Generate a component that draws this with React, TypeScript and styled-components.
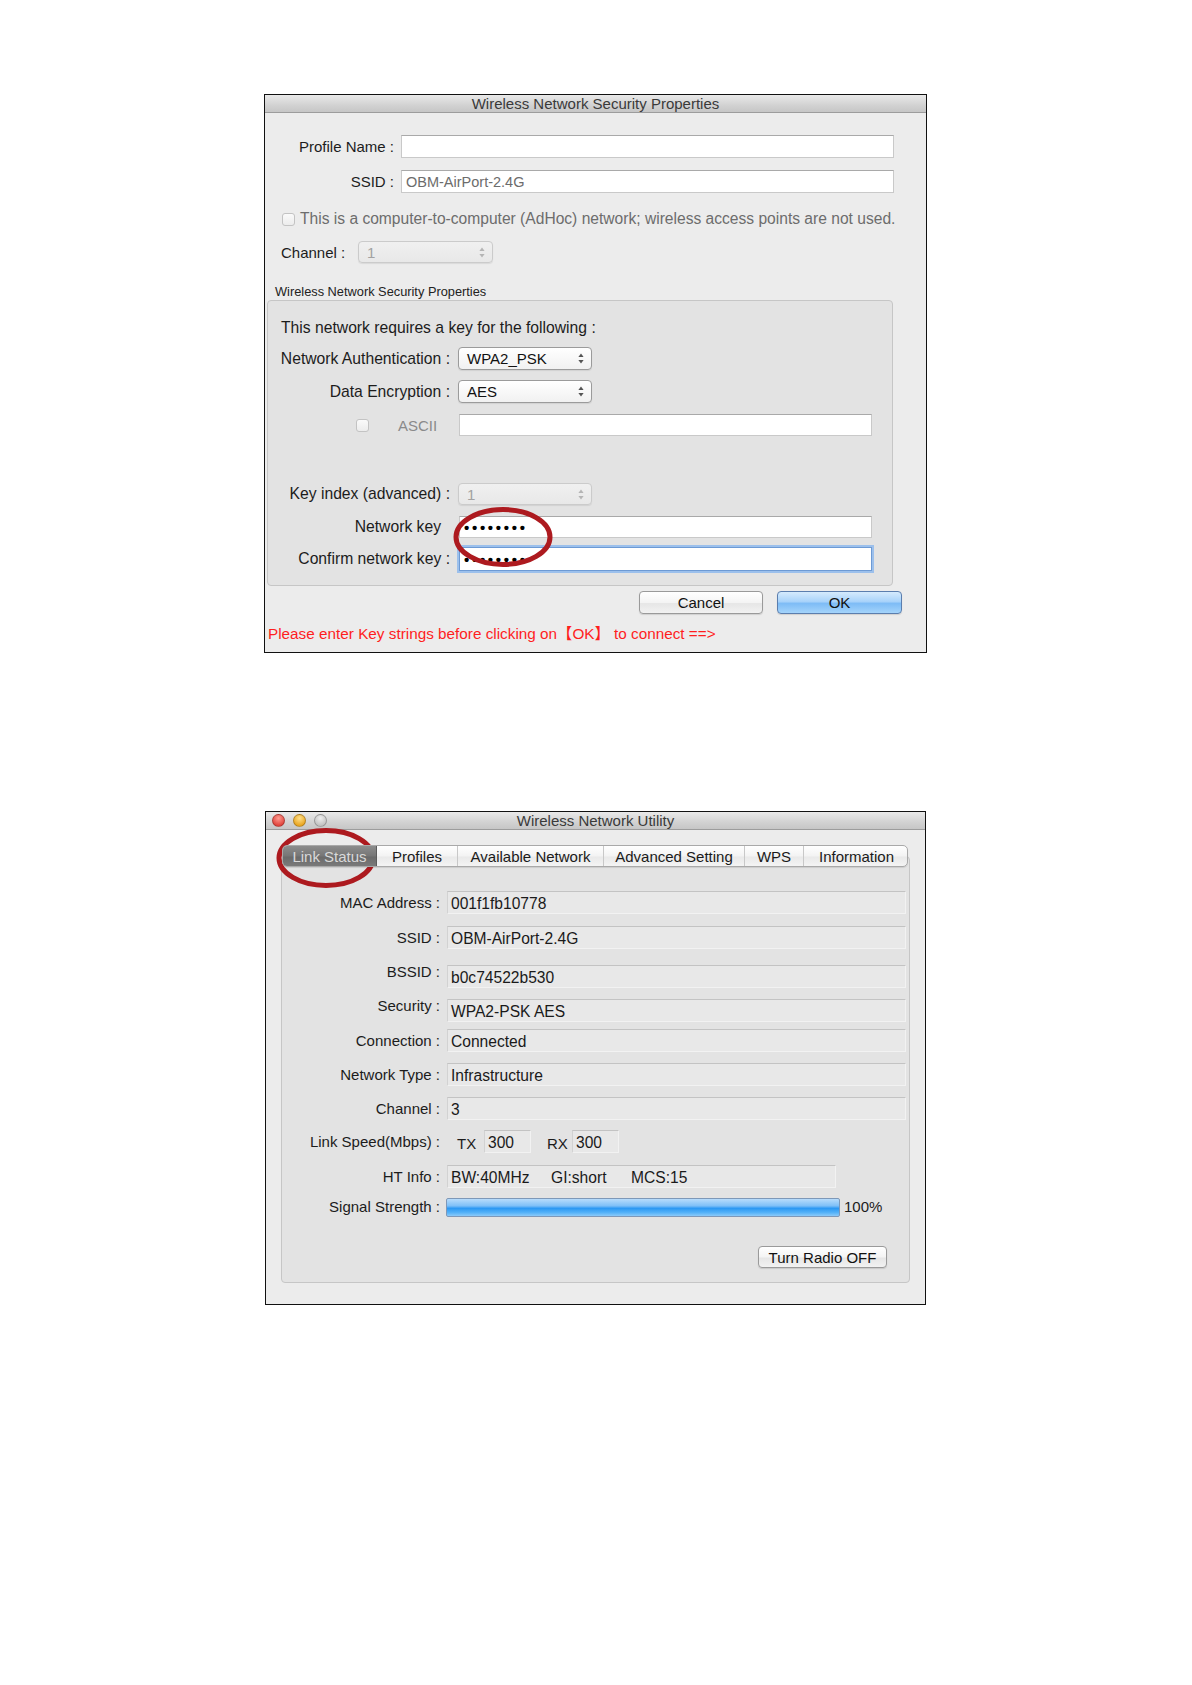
import React from "react";
import styled, { createGlobalStyle } from "styled-components";

const GlobalStyle = createGlobalStyle`
  html, body {
    margin: 0;
    padding: 0;
    background: #fff;
  }
  body {
    font-family: "Liberation Sans", Arial, sans-serif;
  }
`;

const Page = styled.div`
  width: 1192px;
  height: 1685px;
  box-sizing: border-box;
  padding: 94px 0 0 264px;
  display: flex;
  flex-direction: column;
  align-items: flex-start;
`;

const Window = styled.section<{ $w: number; $h: number; $top?: number; $left?: number }>`
  position: relative;
  box-sizing: border-box;
  width: ${(p) => p.$w}px;
  height: ${(p) => p.$h}px;
  margin-top: ${(p) => p.$top ?? 0}px;
  margin-left: ${(p) => p.$left ?? 0}px;
  border: 1px solid #111;
  background: #ececec;
  display: flex;
  flex-direction: column;
  font-size: 15px;
  color: #1c1c1c;
`;

const TitleBar = styled.header`
  position: relative;
  height: 17px;
  flex: none;
  border-bottom: 1px solid #9c9c9c;
  background: linear-gradient(#e9e9e9, #d2d2d2 60%, #c6c6c6);
  display: flex;
  align-items: center;
  justify-content: center;
  font-size: 15px;
  color: #3a3a3a;
`;

const Lights = styled.div`
  position: absolute;
  left: 6px;
  top: 2px;
  display: flex;
  gap: 8px;
`;

const Light = styled.span<{ $c1: string; $c2: string }>`
  width: 13px;
  height: 13px;
  border-radius: 50%;
  box-sizing: border-box;
  border: 1px solid rgba(0, 0, 0, 0.25);
  background: radial-gradient(circle at 50% 30%, ${(p) => p.$c1}, ${(p) => p.$c2} 75%);
`;

const Body = styled.div`
  display: flex;
  flex-direction: column;
  flex: 1;
`;

const Row = styled.div<{ $top: number; $h?: number; $pl?: number }>`
  display: flex;
  align-items: center;
  margin-top: ${(p) => p.$top}px;
  height: ${(p) => p.$h ?? 23}px;
  padding-left: ${(p) => p.$pl ?? 0}px;
  flex: none;
`;

const Label = styled.span<{ $w: number; $gap: number; $pr?: number; $lift?: number }>`
  width: ${(p) => p.$w}px;
  margin-right: ${(p) => p.$gap}px;
  padding-right: ${(p) => p.$pr ?? 0}px;
  box-sizing: border-box;
  text-align: right;
  white-space: nowrap;
  position: relative;
  top: ${(p) => -(p.$lift ?? 0)}px;
`;

const PlainText = styled.span<{ $w?: number; $color?: string; $size?: number }>`
  ${(p) => (p.$w ? `width: ${p.$w}px;` : "")}
  ${(p) => (p.$size ? `font-size: ${p.$size}px;` : "")}
  color: ${(p) => p.$color ?? "#1c1c1c"};
  white-space: nowrap;
`;

const TextInput = styled.div<{ $w: number; $h?: number; $focus?: boolean; $color?: string }>`
  width: ${(p) => p.$w}px;
  height: ${(p) => p.$h ?? 23}px;
  box-sizing: border-box;
  background: #fff;
  border: 1px solid ${(p) => (p.$focus ? "#6d9ad4" : "#c9c9c9")};
  border-top-color: ${(p) => (p.$focus ? "#6d9ad4" : "#a9a9a9")};
  box-shadow: ${(p) => (p.$focus ? "0 0 0 2px #9cc0ec" : "none")};
  display: flex;
  align-items: center;
  padding-left: 4px;
  color: ${(p) => p.$color ?? "#111"};
  font-size: 14.5px;
`;

const Dots = styled.span`
  font-size: 15px;
  font-weight: bold;
  letter-spacing: 2.7px;
  color: #000;
`;

const SelectBox = styled.div<{ $w: number; $h?: number; $disabled?: boolean }>`
  width: ${(p) => p.$w}px;
  height: ${(p) => p.$h ?? 23}px;
  box-sizing: border-box;
  border-radius: 4px;
  border: 1px solid ${(p) => (p.$disabled ? "#cbcbcb" : "#9b9b9b")};
  background: ${(p) => (p.$disabled ? "linear-gradient(#f0f0f0, #e8e8e8)" : "linear-gradient(#ffffff, #f1f1f1)")};
  box-shadow: 0 1px 1px rgba(0, 0, 0, 0.08);
  display: flex;
  align-items: center;
  justify-content: space-between;
  padding: 0 7px 0 8px;
  font-size: 15px;
  color: ${(p) => (p.$disabled ? "#a2a2a2" : "#111")};
`;

const Checkbox = styled.span<{ $ml?: number }>`
  width: 13px;
  height: 13px;
  box-sizing: border-box;
  border: 1px solid #c3c3c3;
  border-radius: 3px;
  background: linear-gradient(#fafafa, #ececec);
  margin-left: ${(p) => p.$ml ?? 0}px;
  flex: none;
`;

const GroupCaption = styled.div`
  margin-top: 21px;
  height: 14px;
  padding-left: 10px;
  font-size: 12.8px;
  color: #222;
  display: flex;
  align-items: center;
`;

const GroupBox = styled.div`
  margin: 2px 0 0 2px;
  width: 626px;
  height: 286px;
  box-sizing: border-box;
  border: 1px solid #c6c6c6;
  border-radius: 4px;
  background: #e3e3e3;
  display: flex;
  flex-direction: column;
  font-size: 15.7px;
`;

const ButtonRow = styled.div`
  margin-top: 5px;
  height: 23px;
  display: flex;
  justify-content: flex-end;
  gap: 14px;
  padding-right: 24px;
`;

const MacButton = styled.button<{ $w: number; $primary?: boolean; $h?: number }>`
  width: ${(p) => p.$w}px;
  height: ${(p) => p.$h ?? 23}px;
  border-radius: 4px;
  font-family: "Liberation Sans", Arial, sans-serif;
  font-size: 15px;
  color: #111;
  padding: 0;
  cursor: default;
  border: 1px solid ${(p) => (p.$primary ? "#5b7eae" : "#9a9a9a")};
  background: ${(p) =>
    p.$primary
      ? "linear-gradient(#d5ebfd, #a9d3fa 45%, #7ebcf6 55%, #a4d4fb)"
      : "linear-gradient(#ffffff, #f4f4f4 50%, #e6e6e6 55%, #f2f2f2)"};
  box-shadow: 0 1px 1px rgba(0, 0, 0, 0.12);
`;

const Warning = styled.div`
  margin-top: 9px;
  height: 17px;
  padding-left: 3px;
  color: #ff1e1e;
  font-size: 15.3px;
  font-family: "Liberation Sans", "Noto Sans CJK SC", sans-serif;
  display: flex;
  align-items: center;
  white-space: nowrap;
`;

const Highlight = styled.svg<{ $x: number; $y: number }>`
  position: absolute;
  left: ${(p) => p.$x}px;
  top: ${(p) => p.$y}px;
  pointer-events: none;
  overflow: visible;
`;

/* ---- tab view ---- */

const TabBar = styled.div`
  position: relative;
  z-index: 1;
  margin: 15px 0 0 16px;
  width: 626px;
  height: 22px;
  box-sizing: border-box;
  border: 1px solid #a9a9a9;
  border-radius: 5px;
  background: linear-gradient(#ffffff, #f3f3f3 50%, #e9e9e9 55%, #f4f4f4);
  display: flex;
  overflow: hidden;
  box-shadow: 0 1px 1px rgba(0, 0, 0, 0.1);
`;

const Tab = styled.div<{ $w: number; $active?: boolean; $last?: boolean }>`
  width: ${(p) => p.$w}px;
  flex: none;
  box-sizing: border-box;
  display: flex;
  align-items: center;
  justify-content: center;
  font-size: 15px;
  white-space: nowrap;
  color: ${(p) => (p.$active ? "#d9d9d9" : "#1a1a1a")};
  background: ${(p) => (p.$active ? "linear-gradient(#8c8c8c, #767676 50%, #6a6a6a 55%, #7a7a7a)" : "transparent")};
  border-right: ${(p) => (p.$last ? "none" : p.$active ? "1px solid #5c5c5c" : "1px solid #c8c8c8")};
`;

const Panel = styled.div`
  margin: -11px 0 0 15px;
  width: 629px;
  height: 427px;
  box-sizing: border-box;
  border: 1px solid #c6c6c6;
  border-radius: 4px;
  background: #e3e3e3;
  display: flex;
  flex-direction: column;
`;

const Field = styled.div<{ $w: number; $h?: number }>`
  width: ${(p) => p.$w}px;
  height: ${(p) => p.$h ?? 23}px;
  box-sizing: border-box;
  background: #e8e8e8;
  border: 1px solid #f2f2f2;
  border-top-color: #c3c3c3;
  border-left-color: #d2d2d2;
  padding: 3px 0 0 3px;
  display: flex;
  align-items: center;
  font-size: 15.6px;
  color: #1a1a1a;
  white-space: nowrap;
`;

const FieldPart = styled.span<{ $w: number }>`
  width: ${(p) => p.$w}px;
  flex: none;
`;

const SignalBar = styled.div`
  width: 394px;
  height: 19px;
  box-sizing: border-box;
  border: 1px solid #7e98b8;
  border-radius: 2px;
  background: linear-gradient(#b8dcfb, #7fc0f8 40%, #2b98f3 55%, #55b2f8 80%, #8ccaf9);
`;

const ButtonDock = styled.div`
  margin-top: 29px;
  display: flex;
  justify-content: flex-end;
  padding-right: 22px;
`;

function Arrows({ disabled }: { disabled?: boolean }) {
  const c = disabled ? "#b5b5b5" : "#555";
  return (
    <svg width="6" height="11" viewBox="0 0 6 11">
      <path d="M3 0.5 L5.6 4 H0.4 Z" fill={c} />
      <path d="M3 10.5 L5.6 7 H0.4 Z" fill={c} />
    </svg>
  );
}

function Ellipse({ x, y }: { x: number; y: number }) {
  return (
    <Highlight $x={x} $y={y} width="100" height="60" viewBox="0 0 100 60">
      <ellipse cx="50" cy="30" rx="47" ry="27.5" fill="none" stroke="#ad1a1f" strokeWidth="5" />
    </Highlight>
  );
}

function SecurityDialog() {
  return (
    <Window $w={663} $h={559}>
      <TitleBar>Wireless Network Security Properties</TitleBar>
      <Body>
        <Row $top={22}>
          <Label $w={129} $gap={7}>Profile Name :</Label>
          <TextInput $w={493} />
        </Row>
        <Row $top={12}>
          <Label $w={129} $gap={7}>SSID :</Label>
          <TextInput $w={493} $color="#6c6c6c">OBM-AirPort-2.4G</TextInput>
        </Row>
        <Row $top={18} $h={16} $pl={17}>
          <Checkbox />
          <PlainText $color="#6d6d6d" $size={15.6} style={{ marginLeft: 5 }}>
            This is a computer-to-computer (AdHoc) network; wireless access points are not used.
          </PlainText>
        </Row>
        <Row $top={14} $h={22} $pl={16}>
          <PlainText $w={77}>Channel :</PlainText>
          <SelectBox $w={135} $h={22} $disabled>
            1<Arrows disabled />
          </SelectBox>
        </Row>
        <GroupCaption>Wireless Network Security Properties</GroupCaption>
        <GroupBox>
          <Row $top={19} $h={16} $pl={13}>
            <PlainText>This network requires a key for the following :</PlainText>
          </Row>
          <Row $top={11}>
            <Label $w={182} $gap={8}>Network Authentication :</Label>
            <SelectBox $w={134}>
              WPA2_PSK<Arrows />
            </SelectBox>
          </Row>
          <Row $top={10}>
            <Label $w={182} $gap={8}>Data Encryption :</Label>
            <SelectBox $w={134}>
              AES<Arrows />
            </SelectBox>
          </Row>
          <Row $top={11} $h={22}>
            <Checkbox $ml={88} />
            <PlainText $w={61} $color="#8a8a8a" $size={15} style={{ marginLeft: 29 }}>
              ASCII
            </PlainText>
            <TextInput $w={413} $h={22} />
          </Row>
          <Row $top={47} $h={22}>
            <Label $w={182} $gap={8}>Key index (advanced) :</Label>
            <SelectBox $w={134} $h={22} $disabled>
              1<Arrows disabled />
            </SelectBox>
          </Row>
          <Row $top={11} $h={22}>
            <Label $w={182} $gap={9} $pr={9}>Network key</Label>
            <TextInput $w={413} $h={22}>
              <Dots>••••••••</Dots>
            </TextInput>
          </Row>
          <Row $top={9} $h={24}>
            <Label $w={182} $gap={9}>Confirm network key :</Label>
            <TextInput $w={413} $h={24} $focus>
              <Dots>••••••••</Dots>
            </TextInput>
          </Row>
        </GroupBox>
        <ButtonRow>
          <MacButton $w={124}>Cancel</MacButton>
          <MacButton $w={125} $primary>
            OK
          </MacButton>
        </ButtonRow>
        <Warning>Please enter Key strings before clicking on【OK】 to connect ==&gt;</Warning>
      </Body>
      <Ellipse x={188} y={412} />
    </Window>
  );
}

const tabs = [
  { name: "Link Status", w: 94 },
  { name: "Profiles", w: 81 },
  { name: "Available Network", w: 146 },
  { name: "Advanced Setting", w: 141 },
  { name: "WPS", w: 59 },
  { name: "Information", w: 105 },
];

const infoRows = [
  { label: "MAC Address :", value: "001f1fb10778", top: 34 },
  { label: "SSID :", value: "OBM-AirPort-2.4G", top: 12 },
  { label: "BSSID :", value: "b0c74522b530", top: 16, lift: 5 },
  { label: "Security :", value: "WPA2-PSK AES", top: 11, lift: 5 },
  { label: "Connection :", value: "Connected", top: 7 },
  { label: "Network Type :", value: "Infrastructure", top: 11 },
  { label: "Channel :", value: "3", top: 11 },
];

function UtilityWindow() {
  return (
    <Window $w={661} $h={494} $top={158} $left={1}>
      <TitleBar>
        <Lights>
          <Light $c1="#ff9a90" $c2="#e0443c" />
          <Light $c1="#ffe08a" $c2="#e9a520" />
          <Light $c1="#eeeeee" $c2="#c2c2c2" />
        </Lights>
        Wireless Network Utility
      </TitleBar>
      <Body>
        <TabBar>
          {tabs.map((t, i) => (
            <Tab key={t.name} $w={t.w} $active={i === 0} $last={i === tabs.length - 1}>
              {t.name}
            </Tab>
          ))}
        </TabBar>
        <Panel>
          {infoRows.map((r) => (
            <Row key={r.label} $top={r.top}>
              <Label $w={158} $gap={7} $lift={r.lift}>
                {r.label}
              </Label>
              <Field $w={459}>{r.value}</Field>
            </Row>
          ))}
          <Row $top={10}>
            <Label $w={158} $gap={17}>Link Speed(Mbps) :</Label>
            <PlainText $w={27} style={{ paddingTop: 3 }}>TX</PlainText>
            <Field $w={47}>300</Field>
            <PlainText $w={25} style={{ marginLeft: 16, paddingTop: 3 }}>RX</PlainText>
            <Field $w={47}>300</Field>
          </Row>
          <Row $top={12}>
            <Label $w={158} $gap={7}>HT Info :</Label>
            <Field $w={389}>
              <FieldPart $w={100}>BW:40MHz</FieldPart>
              <FieldPart $w={80}>GI:short</FieldPart>
              <FieldPart $w={80}>MCS:15</FieldPart>
            </Field>
          </Row>
          <Row $top={10} $h={19}>
            <Label $w={158} $gap={6} $lift={1}>Signal Strength :</Label>
            <SignalBar />
            <PlainText $size={15} style={{ marginLeft: 4, position: "relative", top: -1 }}>100%</PlainText>
          </Row>
          <ButtonDock>
            <MacButton $w={129} $h={22}>
              Turn Radio OFF
            </MacButton>
          </ButtonDock>
        </Panel>
      </Body>
      <Ellipse x={10} y={16} />
    </Window>
  );
}

export default function App() {
  return (
    <>
      <GlobalStyle />
      <Page>
        <SecurityDialog />
        <UtilityWindow />
      </Page>
    </>
  );
}
